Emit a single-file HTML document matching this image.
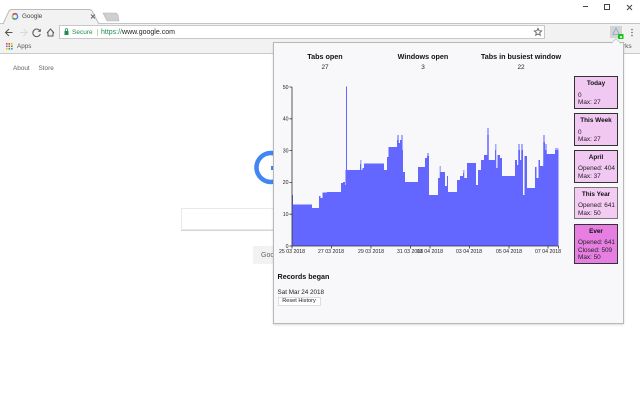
<!DOCTYPE html>
<html><head><meta charset="utf-8"><style>
html,body{margin:0;padding:0;background:#fff}
body{width:640px;height:400px;overflow:hidden;position:relative;font-family:"Liberation Sans",sans-serif;color:#222;filter:blur(.3px)}
.a{position:absolute;white-space:nowrap}
.box{position:absolute;left:574px;width:42px;border:1px solid #333;background:#f0c8f2;font-size:6.4px;line-height:8px;color:#222;box-sizing:content-box}
.box b{position:absolute;left:0;right:0;top:3px;text-align:center;color:#111}
.box span{position:absolute;left:3px;white-space:nowrap}
.h{font-weight:bold;font-size:7.2px;line-height:10px;color:#111;text-align:center;width:120px}
.n{font-size:6.4px;line-height:8px;text-align:center;width:60px;color:#222}
.t{font-size:5.2px;line-height:7px;color:#222;width:40px;text-align:center;top:249px}
</style></head><body>
<svg class="a" style="left:0;top:0" width="640" height="56" viewBox="0 0 640 56">
<rect x="0" y="24" width="640" height="30" fill="#f2f2f2"/>
<path d="M0 23.500H640" stroke="#c4c4c4" fill="none"/>
<path d="M0 53.500H640" stroke="#c9c9c9" fill="none"/>
<path d="M3 24L9 11Q10 9.500 12 9.500H89Q91 9.500 92 11L99 24Z" fill="#f2f2f2"/>
<path d="M3 24L9 11Q10 9.500 12 9.500H89Q91 9.500 92 11L99 24" fill="none" stroke="#bbb"/>
<path d="M103 13H115Q117 13 118 15L119 21H107Z" fill="#cfcfcf" stroke="#b5b5b5" stroke-width=".6"/>
<circle cx="15" cy="16.500" r="2.600" fill="none" stroke="#4285f4" stroke-width="1.400"/>
<path d="M13 14.500A2.600 2.600 0 0 1 17 14.500" stroke="#ea4335" stroke-width="1.400" fill="none"/>
<path d="M12.800 18A2.600 2.600 0 0 0 15.500 19" stroke="#34a853" stroke-width="1.400" fill="none"/>
<path d="M12.500 15.300V17.700" stroke="#fbbc05" stroke-width="1.400" fill="none"/>
<path d="M91 14.500L95 18.500M95 14.500L91 18.500" stroke="#666" stroke-width="1"/>
<path d="M12.500 32.500H6M9 29L5.500 32.500L9 36" fill="none" stroke="#555" stroke-width="1"/>
<path d="M20 32.500H26.500M23.500 29L27 32.500L23.500 36" fill="none" stroke="#d8d8d8" stroke-width="1"/>
<path d="M40 31A3.800 3.800 0 1 0 40.300 34" fill="none" stroke="#555" stroke-width="1"/>
<path d="M40.800 28.800V31.800H37.800Z" fill="#555"/>
<path d="M47 33L50.500 29L54 33M48 32.500V36H53V32.500" fill="none" stroke="#555" stroke-width="1"/>
<rect x="59.500" y="25.500" width="485" height="13" fill="#fff" stroke="#c8c8c8"/>
<rect x="64.500" y="31" width="4" height="4" fill="#1e8e4e"/>
<path d="M65.300 31V29.800A1.200 1.200 0 0 1 67.700 29.800V31" fill="none" stroke="#1e8e4e" stroke-width=".8"/>
<path d="M97.500 29V36" stroke="#ccc"/>
<path d="M538 28.300L539.100 30.800L541.700 31L539.700 32.700L540.300 35.300L538 33.900L535.700 35.300L536.300 32.700L534.300 31L536.900 30.800Z" fill="none" stroke="#555" stroke-width=".8"/>
<rect x="610" y="26" width="12" height="12" fill="#d4d4d4"/>
<path d="M616 28L612.800 34.500H619.200Z" fill="none" stroke="#8fb4d0" stroke-width="1"/>
<rect x="618" y="34" width="5.500" height="5" fill="#12c812"/>
<rect x="620" y="36" width="2" height="2" fill="#d8f5d8"/>
<circle cx="632" cy="29.500" r=".8" fill="#666"/><circle cx="632" cy="32.500" r=".8" fill="#666"/><circle cx="632" cy="35.500" r=".8" fill="#666"/>
<path d="M583 6.500H588" stroke="#444"/>
<rect x="604.500" y="4.500" width="5" height="5" fill="none" stroke="#444"/>
<path d="M627 5L632 10M632 5L627 10" stroke="#444"/>
<rect x="6" y="43" width="1.600" height="1.600" fill="#ea4335"/><rect x="8.500" y="43" width="1.600" height="1.600" fill="#ea4335"/><rect x="11" y="43" width="1.600" height="1.600" fill="#fbbc05"/>
<rect x="6" y="45.500" width="1.600" height="1.600" fill="#4285f4"/><rect x="8.500" y="45.500" width="1.600" height="1.600" fill="#ea4335"/><rect x="11" y="45.500" width="1.600" height="1.600" fill="#34a853"/>
<rect x="6" y="48" width="1.600" height="1.600" fill="#fbbc05"/><rect x="8.500" y="48" width="1.600" height="1.600" fill="#34a853"/><rect x="11" y="48" width="1.600" height="1.600" fill="#4285f4"/>
</svg>
<div class="a" style="left:22px;top:12px;font-size:6.300px;line-height:9px;color:#444">Google</div>
<div class="a" style="left:72px;top:28px;font-size:6.500px;line-height:9px;color:#1e8e4e">Secure</div>
<div class="a" style="left:101px;top:28px;font-size:7px;line-height:9px;color:#222"><span style="color:#1e8e4e">https://</span>www.google.com</div>
<div class="a" style="left:17px;top:42px;font-size:6.300px;line-height:9px;color:#555">Apps</div>
<div class="a" style="left:623px;top:42px;font-size:6.500px;line-height:9px;color:#555">rks</div>
<div class="a" style="left:13px;top:64px;font-size:6.400px;line-height:9px;color:#666">About</div>
<div class="a" style="left:38.500px;top:64px;font-size:6.400px;line-height:9px;color:#666">Store</div>

<svg class="a" style="left:170px;top:140px" width="110" height="130">
<circle cx="101" cy="27.500" r="14.500" fill="none" stroke="#4285f4" stroke-width="4.500"/>
<rect x="101" y="26" width="9" height="4" fill="#4285f4"/>
<rect x="11.500" y="68.500" width="100" height="21" fill="#fff" stroke="#e8e8e8"/>
<path d="M11 90.500H110" stroke="#d5d5d5"/>
<rect x="83" y="106" width="27" height="18" fill="#f2f2f2"/>
</svg>
<div class="a" style="left:261px;top:251px;font-size:7px;line-height:9px;color:#666">Goo</div>

<div class="a" style="left:273px;top:42px;width:349px;height:280px;background:#f8f8fb;border:1px solid #b8b8b8;box-shadow:0 1px 2px rgba(0,0,0,.15)"></div>
<svg class="a" style="left:611px;top:38px" width="12" height="6"><path d="M0 5.500L5 .8L10 5.500" fill="#f8f8fb" stroke="#bbb" stroke-width=".7"/></svg>

<div class="a h" style="left:265px;top:52px">Tabs open</div>
<div class="a n" style="left:295px;top:64px">27</div>
<div class="a h" style="left:363px;top:52px">Windows open</div>
<div class="a n" style="left:393px;top:64px">3</div>
<div class="a h" style="left:461px;top:52px">Tabs in busiest window</div>
<div class="a n" style="left:491px;top:64px">22</div>

<svg class="a" style="left:280px;top:80px" width="285" height="175" viewBox="280 80 285 175">
<path fill="#a9abff" d="M345 246V170H348V246ZM360 246V160H361.500V246ZM397 246V135H399V246ZM401 246V135H403V246ZM427 246V153H429V246ZM439.500 246V166H441V246ZM463 246V170H464.500V246ZM487 246V128H489V246ZM495 246V144H496.500V246ZM518 246V144H520V246ZM521 246V144H523V246ZM543 246V135H545V246ZM545 246V144H547V246ZM555 246V148H558.500V246Z"/>
<path fill="#6366ff" d="M292 246V195H293V204.500H312V208H319V196H320.500V198H322.500V192.500H327V192H341V183H343V182H345V185H346V86.500H347V170H360V164H361V170H362.500V168H364V163.500H384V170H387V157H388.500V147H397V140H398.500V143H400V140H402V150H403V172H405V182H418V167H425V158H427V156H429V195H438V178H440V172H441V172H445V186H447V176H448V192H457V180H460V176H463V173H464V178H467V163H476V185H478V170H481V160H484V155H487.500V135H488.500V160H495V150H496V168H497.500V155H500V158H502V176H515V160H517V165H518.500V150H520V160H521.500V150H523V195H524.500V156H527V188H535V167H536.500V178H538.500V160H540V166H543.500V142H545V150H546.500V154H555V150H558.500V246Z"/>
<path d="M292 87V246H558.500M289.500 87H292M289.500 118.800H292M289.500 150.600H292M289.500 182.400H292M289.500 214.200H292M289.500 246H292M292 246V248.500M331.500 246V248.500M371 246V248.500M410.500 246V248.500M430 246V248.500M469.500 246V248.500M509 246V248.500M548 246V248.500M558.500 246V248.500" fill="none" stroke="#333" stroke-width=".8"/>
<g font-size="5.200" fill="#222" font-family="Liberation Sans,sans-serif" text-anchor="end">
<text x="288.500" y="88.800">50</text><text x="288.500" y="120.600">40</text><text x="288.500" y="152.400">30</text><text x="288.500" y="184.200">20</text><text x="288.500" y="216">10</text><text x="288.500" y="247.800">0</text></g>
</svg>
<div class="a t" style="left:272px">25 03 2018</div>
<div class="a t" style="left:311px">27 03 2018</div>
<div class="a t" style="left:351px">29 03 2018</div>
<div class="a t" style="left:390px">31 03 2018</div>
<div class="a t" style="left:410px">01 04 2018</div>
<div class="a t" style="left:449px">03 04 2018</div>
<div class="a t" style="left:489px">05 04 2018</div>
<div class="a t" style="left:528px">07 04 2018</div>

<div class="a" style="left:277.500px;top:272px;font-size:7.200px;line-height:10px;font-weight:bold;color:#111">Records began</div>
<div class="a" style="left:277.500px;top:288px;font-size:6.300px;line-height:9px">Sat Mar 24 2018</div>
<div class="a" style="left:277.500px;top:296.500px;width:41px;height:7px;background:#fff;border:.5px solid #ddd;font-size:5.600px;line-height:7px;text-align:center;color:#222">Reset History</div>

<div class="box" style="top:76px;height:31px"><b>Today</b><span style="top:15px">0</span><span style="top:22px">Max: 27</span></div>
<div class="box" style="top:113px;height:31px"><b>This Week</b><span style="top:15px">0</span><span style="top:22px">Max: 27</span></div>
<div class="box" style="top:150px;height:31px"><b>April</b><span style="top:14px">Opened: 404</span><span style="top:22px">Max: 37</span></div>
<div class="box" style="top:187px;height:30px;border-color:#777;background:#f3cbf3"><b>This Year</b><span style="top:14px">Opened: 641</span><span style="top:22px">Max: 50</span></div>
<div class="box" style="top:224px;height:38px;background:#e77fe2"><b>Ever</b><span style="top:14px">Opened: 641</span><span style="top:22px">Closed: 509</span><span style="top:29px">Max: 50</span></div>
</body></html>
